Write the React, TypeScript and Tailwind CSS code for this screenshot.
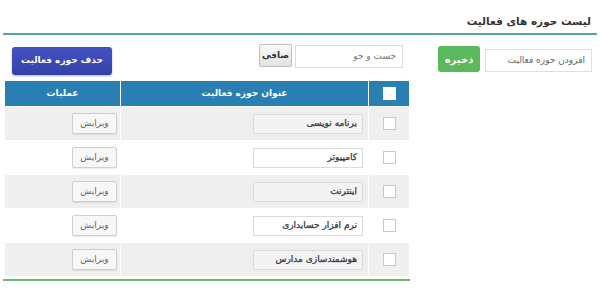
import React from 'react';

const fa = { fontFamily: '"DejaVu Sans", Tahoma, sans-serif' };

const items = [
  'برنامه نویسی',
  'کامپیوتر',
  'اینترنت',
  'نرم افزار حسابداری',
  'هوشمندسازی مدارس',
];

const Row = ({ title, index }: { title: string; index: number }) => {
  const gray = index % 2 === 0;
  const cell = gray ? 'bg-[#efefef]' : 'bg-white';
  return (
    <div className="grid grid-cols-[40px_247px_115px] gap-x-[1px] h-[33px]">
      <div className={`${cell} flex items-center justify-center`}>
        <span className="block w-[13px] h-[13px] border border-[#c9c9c9] bg-white" />
      </div>
      <div className={`${cell} flex items-center pr-[5px]`}>
        <div
          className={`w-[110px] h-[20px] border border-[#dcdcdc] ${gray ? 'bg-[#f3f3f3]' : 'bg-white'} flex items-center px-[5px] text-[9px] text-[#333] whitespace-nowrap overflow-hidden [-webkit-text-stroke:0.25px_#333]`}
        >
          {title}
        </div>
      </div>
      <div className={`${cell} flex items-center pr-[3px]`}>
        <button className="w-[45px] h-[21px] border border-[#cfcfcf] rounded-[2px] bg-[#f7f7f7] text-[9px] text-[#666] shadow-[0_1px_1px_rgba(0,0,0,0.08)]">
          ویرایش
        </button>
      </div>
    </div>
  );
};

export default function App() {
  return (
    <div dir="rtl" className="w-[600px] h-[294px] bg-white overflow-hidden" style={fa}>
      {/* Title */}
      <div className="pt-[14px] pr-[9px] h-[33px] text-[10.5px] font-bold text-[#333]">
        لیست حوزه های فعالیت
      </div>
      <div className="mx-[3px] border-b-2 border-[#53a6a3]" />

      {/* Controls */}
      <div className="flex items-start h-[45px] pr-[8px] pl-[12px]">
        <div className="mt-[14px] w-[107px] h-[23px] border border-[#dedede] flex items-center px-[6px] text-[9px] text-[#666] whitespace-nowrap">
          افزودن حوزه فعالیت
        </div>
        <button className="mt-[11px] mr-[5px] w-[42px] h-[26px] rounded-[3px] bg-[#5cb85c] text-white text-[10px] font-bold">
          ذخیره
        </button>
        <div className="mt-[10px] mr-[35px] w-[108px] h-[23px] border border-[#dedede] flex items-center px-[6px] text-[9px] text-[#777]">
          جست و جو
        </div>
        <button className="mt-[9px] mr-[3px] w-[33px] h-[23px] border border-[#bdbdbd] rounded-[2px] bg-gradient-to-b from-[#fafafa] to-[#e2e2e2] text-[9px] font-bold text-[#333]">
          صافی
        </button>
        <button className="mt-[12px] mr-auto w-[100px] h-[28px] rounded-[3px] bg-gradient-to-b from-[#4352c2] to-[#3441a8] text-white text-[9px] font-bold shadow-[0_1px_2px_rgba(0,0,0,0.3)] whitespace-nowrap">
          حذف حوزه فعالیت
        </button>
      </div>

      {/* Table */}
      <div className="mt-[1px] ml-[5px] mr-auto w-[404px] flex flex-col gap-y-[1px]">
        <div className="grid grid-cols-[40px_247px_115px] gap-x-[1px] h-[25px] text-white text-[9px] font-bold">
          <div className="bg-[#2a7fb2] flex items-center justify-center">
            <span className="block w-[13px] h-[13px] bg-white" />
          </div>
          <div className="bg-[#2a7fb2] flex items-center justify-center">عنوان حوزه فعالیت</div>
          <div className="bg-[#2a7fb2] flex items-center justify-center">عملیات</div>
        </div>
        {items.map((t, i) => (
          <Row key={t} title={t} index={i} />
        ))}
      </div>
      <div className="mt-[3px] ml-[3px] mr-auto w-[407px] border-b-2 border-[#6cb86c]" />
    </div>
  );
}
